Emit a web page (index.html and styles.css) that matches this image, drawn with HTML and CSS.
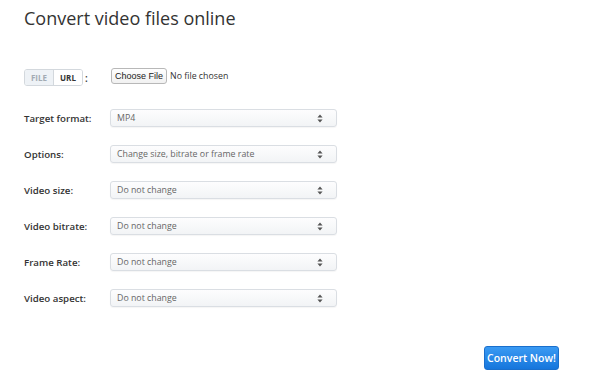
FILE: index.html
```html
<!DOCTYPE html>
<html lang="en">
<head>
    <meta charset="UTF-8">
    <meta name="viewport" content="width=device-width, initial-scale=1.0">
    <title>Convert video files online</title>
    <link rel="stylesheet" href="styles.css">
</head>
<body>

<div class="page">
    <h1>Convert video files online</h1>

    <div class="form">
        <div class="row file-row">
            <div class="label">
                <div class="toggle">
                    <span class="toggle-item active">FILE</span>
                    <span class="toggle-item">URL</span>
                </div>
                <span class="colon">:</span>
            </div>
            <div class="file-input">
                <button type="button" class="choose-btn">Choose File</button>
                <span class="file-status">No file chosen</span>
            </div>
        </div>

        <div class="row">
            <div class="label">Target format:</div>
            <div class="select"><span>MP4</span><svg width="6" height="9" viewBox="0 0 6 9"><path d="M3 0.5 L5.6 3.6 H0.4 Z M3 8.5 L5.6 5.4 H0.4 Z" fill="#555"/></svg></div>
        </div>

        <div class="row">
            <div class="label">Options:</div>
            <div class="select"><span>Change size, bitrate or frame rate</span><svg width="6" height="9" viewBox="0 0 6 9"><path d="M3 0.5 L5.6 3.6 H0.4 Z M3 8.5 L5.6 5.4 H0.4 Z" fill="#555"/></svg></div>
        </div>

        <div class="row">
            <div class="label">Video size:</div>
            <div class="select"><span>Do not change</span><svg width="6" height="9" viewBox="0 0 6 9"><path d="M3 0.5 L5.6 3.6 H0.4 Z M3 8.5 L5.6 5.4 H0.4 Z" fill="#555"/></svg></div>
        </div>

        <div class="row">
            <div class="label">Video bitrate:</div>
            <div class="select"><span>Do not change</span><svg width="6" height="9" viewBox="0 0 6 9"><path d="M3 0.5 L5.6 3.6 H0.4 Z M3 8.5 L5.6 5.4 H0.4 Z" fill="#555"/></svg></div>
        </div>

        <div class="row">
            <div class="label">Frame Rate:</div>
            <div class="select"><span>Do not change</span><svg width="6" height="9" viewBox="0 0 6 9"><path d="M3 0.5 L5.6 3.6 H0.4 Z M3 8.5 L5.6 5.4 H0.4 Z" fill="#555"/></svg></div>
        </div>

        <div class="row">
            <div class="label">Video aspect:</div>
            <div class="select"><span>Do not change</span><svg width="6" height="9" viewBox="0 0 6 9"><path d="M3 0.5 L5.6 3.6 H0.4 Z M3 8.5 L5.6 5.4 H0.4 Z" fill="#555"/></svg></div>
        </div>

        <div class="actions">
            <button type="button" class="convert-btn">Convert Now!</button>
        </div>
    </div>
</div>

</body>
</html>
```

FILE: styles.css
```css
body {
    font-family: "Open Sans", Arial, sans-serif;
    background-color: #fff;
    color: #333;
    margin: 0;
}

.page {
    padding: 0 41px 0 24px;
}

h1 {
    margin: 4px 0 0;
    font-size: 18px;
    line-height: 28px;
    font-weight: 400;
    color: #333;
}

.form {
    margin-top: 37px;
    display: flex;
    flex-direction: column;
    gap: 18px;
}

.row {
    display: flex;
    align-items: center;
    height: 18px;
}

.file-row {
    height: 17px;
    margin-bottom: 5px;
}

.label {
    width: 86px;
    flex-shrink: 0;
    font-size: 9.7px;
    font-weight: 600;
    color: #333;
    display: flex;
    align-items: center;
}

/* FILE / URL switch */
.toggle {
    display: flex;
    height: 17px;
    box-sizing: border-box;
    border: 1px solid #d3d8dd;
    border-radius: 3px;
    overflow: hidden;
}

.toggle-item {
    display: flex;
    align-items: center;
    justify-content: center;
    font-size: 8px;
    font-weight: 700;
    color: #333;
    width: 28px;
    background-color: #fff;
}

.toggle-item.active {
    color: #a3abb4;
    background-color: #eef2f6;
    border-right: 1px solid #d3d8dd;
}

.colon {
    margin-left: 2px;
    font-size: 10px;
}

.file-input {
    display: flex;
    align-items: center;
    margin-left: 1px;
    margin-top: -3px;
}

.choose-btn {
    font-family: "Liberation Sans", Arial, sans-serif;
    font-size: 9px;
    color: #222;
    height: 16px;
    padding: 0 3px;
    background: linear-gradient(#fff, #f1f1f1);
    border: 1px solid #b8b8b8;
    border-radius: 3px;
}

.file-status {
    margin-left: 3px;
    font-size: 8.8px;
    color: #333;
}

/* select boxes */
.select {
    width: 227px;
    height: 18px;
    box-sizing: border-box;
    display: flex;
    align-items: center;
    justify-content: space-between;
    padding: 0 13px 0 6px;
    border: 1px solid #dadee3;
    border-radius: 3px;
    background: linear-gradient(#fdfdfe, #f2f4f6);
    box-shadow: 0 1px 1px rgba(0, 0, 0, 0.04);
    font-size: 8.8px;
    color: #666;
}

.actions {
    display: flex;
    justify-content: flex-end;
    margin-top: 21px;
}

.convert-btn {
    font-family: "Open Sans", Arial, sans-serif;
    font-size: 10.5px;
    font-weight: 600;
    color: #fff;
    width: 75px;
    height: 24px;
    padding: 0;
    background: linear-gradient(#3a9af3, #1676dc);
    border: 1px solid #1a6fcc;
    border-radius: 3px;
    cursor: pointer;
}
```
